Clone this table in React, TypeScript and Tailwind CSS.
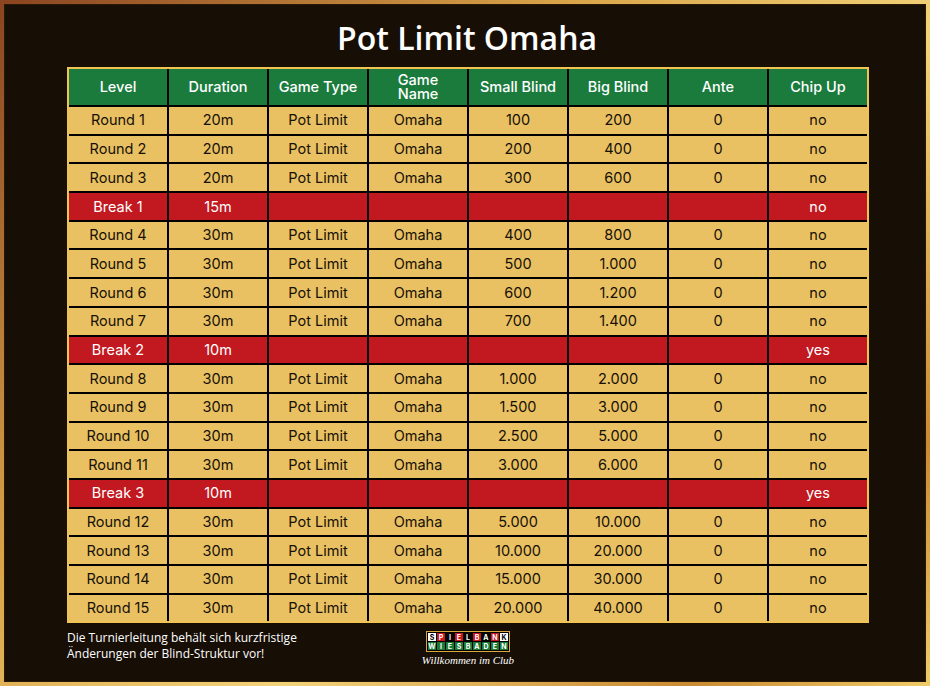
import React from "react";

type Row = {
  level: string;
  duration: string;
  type: string;
  name: string;
  small: string;
  big: string;
  ante: string;
  chip: string;
  isBreak?: boolean;
};

const round = (n: number, d: string, s: string, b: string): Row => ({
  level: `Round ${n}`,
  duration: d,
  type: "Pot Limit",
  name: "Omaha",
  small: s,
  big: b,
  ante: "0",
  chip: "no",
});

const brk = (n: number, d: string, chip: string): Row => ({
  level: `Break ${n}`,
  duration: d,
  type: "",
  name: "",
  small: "",
  big: "",
  ante: "",
  chip,
  isBreak: true,
});

const rows: Row[] = [
  round(1, "20m", "100", "200"),
  round(2, "20m", "200", "400"),
  round(3, "20m", "300", "600"),
  brk(1, "15m", "no"),
  round(4, "30m", "400", "800"),
  round(5, "30m", "500", "1.000"),
  round(6, "30m", "600", "1.200"),
  round(7, "30m", "700", "1.400"),
  brk(2, "10m", "yes"),
  round(8, "30m", "1.000", "2.000"),
  round(9, "30m", "1.500", "3.000"),
  round(10, "30m", "2.500", "5.000"),
  round(11, "30m", "3.000", "6.000"),
  brk(3, "10m", "yes"),
  round(12, "30m", "5.000", "10.000"),
  round(13, "30m", "10.000", "20.000"),
  round(14, "30m", "15.000", "30.000"),
  round(15, "30m", "20.000", "40.000"),
];

const headers = ["Level", "Duration", "Game Type", "Game\nName", "Small Blind", "Big Blind", "Ante", "Chip Up"];

const topLetters = ["S", "P", "I", "E", "L", "B", "A", "N", "K"];
const topColors = ["bg-white text-black", "bg-[#c8161d] text-white", "bg-black text-white", "bg-[#c8161d] text-white", "bg-black text-white", "bg-[#c8161d] text-white", "bg-black text-white", "bg-[#c8161d] text-white", "bg-white text-black"];

function Logo() {
  return (
    <div className="flex flex-col items-center">
      <div className="border border-[#d9a93e] bg-black p-[1px] flex flex-col gap-[1px]">
        <div className="flex gap-[1px]">
          {topLetters.map((l, i) => (
            <div
              key={i}
              className={`w-[8px] h-[8px] flex items-center justify-center text-[7px] leading-none font-bold ${topColors[i]}`}
            >
              {l}
            </div>
          ))}
        </div>
        <div className="flex gap-[1px]">
          {"WIESBADEN".split("").map((l, i) => (
            <div
              key={i}
              className="w-[8px] h-[8px] flex items-center justify-center text-[7px] leading-none font-bold bg-[#1c7a36] text-white"
            >
              {l}
            </div>
          ))}
        </div>
      </div>
      <div className="mt-[3px] text-white italic text-[11px] leading-none" style={{ fontFamily: '"Liberation Serif", serif' }}>
        Willkommen im Club
      </div>
    </div>
  );
}

export default function App() {
  return (
    <div className="w-[930px] h-[686px] p-[4px] bg-[linear-gradient(135deg,#8a4420_0%,#d9a449_35%,#f3d37a_60%,#c98a32_85%,#f0cc6a_100%)]">
      <div className="w-full h-full bg-[#170e05] border border-[#2a1806] flex flex-col" style={{ fontFamily: "Inter, sans-serif" }}>
        <div className="h-[62px] flex items-center justify-center pt-[4px] pl-[4px]">
          <h1
            className="text-white font-semibold text-[32px] leading-none"
            style={{ fontFamily: '"Open Sans", "Noto Sans", sans-serif' }}
          >
            Pot Limit Omaha
          </h1>
        </div>
        <div className="ml-[62px] mr-[56px] border-2 border-[#f0c453] bg-black">
          <div className="grid grid-cols-8 gap-[2px]">
            {headers.map((h) => (
              <div
                key={h}
                className="h-[36px] bg-[#1a7b3d] text-white text-[14.5px] leading-[14px] font-medium flex items-center justify-center text-center whitespace-pre-line"
              >
                {h}
              </div>
            ))}
            {rows.map((r, i) => {
              const cells = [r.level, r.duration, r.type, r.name, r.small, r.big, r.ante, r.chip];
              return cells.map((c, j) => (
                <div
                  key={`${i}-${j}`}
                  className={`h-[26.7px] text-[14.5px] flex items-center justify-center ${
                    r.isBreak ? "bg-[#c1191f] text-white" : "bg-[#e9c163] text-[#161006]"
                  }`}
                >
                  {c}
                </div>
              ));
            })}
          </div>
        </div>
        <div className="ml-[62px] mr-[56px] mt-[7px] grid grid-cols-3">
          <div
            className="text-white text-[12px] leading-[16px]"
            style={{ fontFamily: '"Open Sans", sans-serif' }}
          >
            Die Turnierleitung behält sich kurzfristige
            <br />
            Änderungen der Blind-Struktur vor!
          </div>
          <div className="flex justify-center pt-[1px]">
            <Logo />
          </div>
          <div />
        </div>
      </div>
    </div>
  );
}
